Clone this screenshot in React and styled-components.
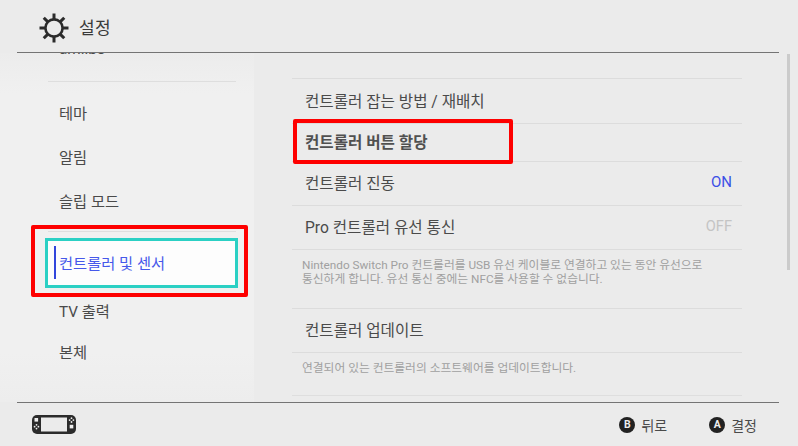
import React from "react";
import styled, { createGlobalStyle } from "styled-components";

const Global = createGlobalStyle`
  html, body { margin: 0; padding: 0; }
  body { background: #ebebeb; font-family: "Roboto", "Noto Sans CJK KR", sans-serif; }
`;

const Screen = styled.div`
  position: relative;
  width: 798px;
  height: 446px;
  overflow: hidden;
  background: #ebebeb;
  color: #2d2d2d;
  display: flex;
  flex-direction: column;
`;

const Header = styled.header`
  height: 53px;
  margin: 0 19px 0 17px;
  padding-left: 22px;
  padding-top: 3px;
  box-sizing: border-box;
  display: flex;
  align-items: center;
  gap: 10px;
  border-bottom: 1px solid #747474;
  flex: none;
`;

const Title = styled.h1`
  margin: -3px 0 0;
  font-size: 17px;
  font-weight: 400;
  color: #3a3a3a;
  letter-spacing: 0.4px;
`;

const Body = styled.div`
  position: relative;
  flex: 1;
  min-height: 0;
  display: flex;
  overflow: hidden;
`;

const Side = styled.nav`
  width: 254px;
  flex: none;
  background: linear-gradient(#ececec, #f0f0f0 40px, #f0f0f0 300px, #ededed);
  padding-left: 48px;
  padding-right: 18px;
  box-sizing: border-box;
  overflow: hidden;
`;

const SideScroll = styled.div`
  margin-top: -27px;
`;

const SideItem = styled.div`
  height: ${(p) => p.$h || 44}px;
  box-sizing: border-box;
  display: flex;
  align-items: center;
  padding: 0 0 2px 11px;
  font-size: 15.3px;
  color: #4a4a4a;
`;

const Rule = styled.div`
  height: 1px;
  background: #dedede;
  margin: ${(p) => p.$top || 0}px 0 ${(p) => p.$bottom || 0}px;
`;

const Selected = styled.div`
  position: relative;
  margin: 0 -2px 1px -3px;
  height: 50px;
  background: #fdfdfd;
  border: 3px solid #2bd0c4;
  box-sizing: border-box;
  display: flex;
  align-items: center;
  padding: 0 0 3px 11px;
  font-size: 15.3px;
  color: #4658ea;

  &::before {
    content: "";
    position: absolute;
    left: 6px;
    top: 5px;
    bottom: 6px;
    width: 2px;
    background: #3246dc;
  }
`;

const Main = styled.main`
  flex: 1;
  padding: 25px 56px 0 38px;
  min-width: 0;
`;

const Thumb = styled.div`
  position: absolute;
  right: 8px;
  top: 1px;
  width: 3px;
  height: 216px;
  background: #cbcbcb;
`;

const Row = styled.div`
  height: ${(p) => p.$h || 44}px;
  box-sizing: border-box;
  border-top: 1px solid #dcdcdc;
  display: flex;
  align-items: center;
  justify-content: space-between;
  padding: 0 10px 3px 13px;
  font-size: 15.6px;
  font-weight: ${(p) => (p.$bold ? 700 : 400)};
  color: ${(p) => (p.$bold ? "#505050" : "#4a4a4a")};
`;

const Value = styled.span`
  font-size: ${(p) => (p.$on ? 15 : 14.6)}px;
  font-weight: 400;
  color: ${(p) => (p.$on ? "#3c50e6" : "#c4c4c4")};
`;

const Note = styled.div`
  height: ${(p) => p.$h}px;
  box-sizing: border-box;
  border-top: 1px solid #dcdcdc;
  padding: 8px 10px 0 10px;
  font-size: 11.75px;
  line-height: 14px;
  color: #a0a0a0;
  white-space: nowrap;
`;

const Footer = styled.footer`
  height: 44px;
  flex: none;
  margin: 0 19px 0 17px;
  border-top: 1px solid #747474;
  display: flex;
  align-items: center;
  padding: 0 22px 0 15px;
  gap: 42px;
  box-sizing: border-box;
`;

const Console = styled.div`
  margin-right: auto;
  display: flex;
`;

const Hint = styled.div`
  display: flex;
  align-items: center;
  gap: 6px;
  font-size: 14px;
  color: #4a4a4a;
`;

const Badge = styled.span`
  width: 16px;
  height: 16px;
  border-radius: 50%;
  background: #222;
  color: #eee;
  font-size: 10.5px;
  font-weight: 700;
  display: flex;
  align-items: center;
  justify-content: center;
`;

const Mark = styled.div`
  position: absolute;
  left: ${(p) => p.$x}px;
  top: ${(p) => p.$y}px;
  width: ${(p) => p.$w}px;
  height: ${(p) => p.$h}px;
  box-sizing: border-box;
  border: 4px solid #fe0000;
  border-radius: 2px;
  pointer-events: none;
`;

const Gear = () => (
  <svg width="30" height="30" viewBox="0 0 30 30" fill="none" stroke="#2b2b2b">
    <circle cx="15" cy="15" r="8.6" strokeWidth="2.6" />
    {[0, 45, 90, 135, 180, 225, 270, 315].map((a) => (
      <line key={a} x1="15" y1="0.5" x2="15" y2="6" strokeWidth="3" transform={`rotate(${a} 15 15)`} />
    ))}
  </svg>
);

const SwitchIcon = () => (
  <svg width="44" height="19" viewBox="0 0 44 19">
    <rect x="0" y="0" width="44" height="19" rx="5" fill="#2b2b2b" />
    <rect x="9" y="2.5" width="26" height="14" fill="#ebebeb" />
    <rect x="2.5" y="3" width="3.6" height="3.6" fill="#eee" />
    <rect x="37.7" y="9.8" width="3.6" height="3.6" fill="#eee" />
    {[[4.5, 9.8], [2.6, 11.7], [6.4, 11.7], [4.5, 13.6]].map(([x, y]) => (
      <circle key={`l${x}${y}`} cx={x} cy={y} r="0.9" fill="#eee" />
    ))}
    {[[39.5, 3.2], [37.6, 5.1], [41.4, 5.1], [39.5, 7]].map(([x, y]) => (
      <circle key={`r${x}${y}`} cx={x} cy={y} r="0.9" fill="#eee" />
    ))}
  </svg>
);

export default function App() {
  return (
    <Screen>
      <Global />
      <Header>
        <Gear />
        <Title>설정</Title>
      </Header>
      <Body>
        <Side>
          <SideScroll>
            <SideItem $h={48}>amiibo</SideItem>
            <Rule $top={7} $bottom={9} />
            <SideItem>테마</SideItem>
            <SideItem>알림</SideItem>
            <SideItem>슬립 모드</SideItem>
            <Rule $top={8} $bottom={6} />
            <Selected>컨트롤러 및 센서</Selected>
            <SideItem>TV 출력</SideItem>
            <SideItem $h={38}>본체</SideItem>
          </SideScroll>
        </Side>
        <Main>
          <Row $h={45}>컨트롤러 잡는 방법 / 재배치</Row>
          <Row $h={38} $bold>컨트롤러 버튼 할당</Row>
          <Row>컨트롤러 진동<Value $on>ON</Value></Row>
          <Row>Pro 컨트롤러 유선 통신<Value>OFF</Value></Row>
          <Note $h={59}>
            Nintendo Switch Pro 컨트롤러를 USB 유선 케이블로 연결하고 있는 동안 유선으로
            <br />
            통신하게 합니다. 유선 통신 중에는 NFC를 사용할 수 없습니다.
          </Note>
          <Row>컨트롤러 업데이트</Row>
          <Note $h={43}>연결되어 있는 컨트롤러의 소프트웨어를 업데이트합니다.</Note>
          <Rule />
        </Main>
        <Thumb />
      </Body>
      <Footer>
        <Console><SwitchIcon /></Console>
        <Hint><Badge>B</Badge>뒤로</Hint>
        <Hint><Badge>A</Badge>결정</Hint>
      </Footer>
      <Mark $x={31} $y={225} $w={217} $h={72} />
      <Mark $x={293} $y={119} $w={220} $h={45} />
    </Screen>
  );
}
